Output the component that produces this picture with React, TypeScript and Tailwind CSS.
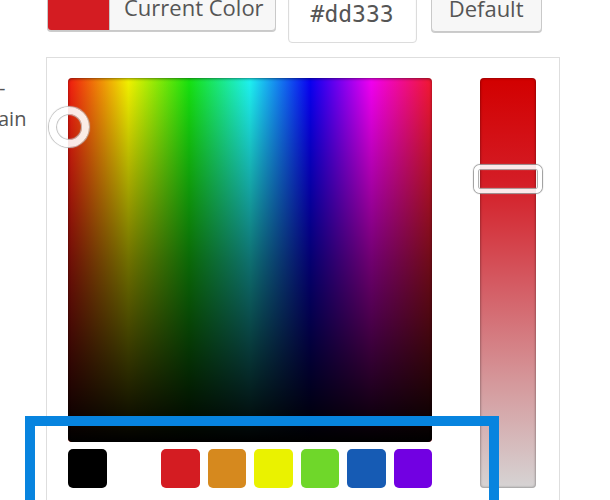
import React from 'react';

const palette = ['#000000', '#ffffff', '#d41c22', '#d6891e', '#eaf200', '#6fd72a', '#165bb4', '#7200e2'];

function CurrentColorButton() {
  return (
    <button className="flex h-[47px] items-stretch overflow-hidden rounded-[4px] border border-[#c9c9c9] bg-[#f7f7f7] shadow-[0_1px_0_#ccc]">
      <span className="w-[61px] bg-[#d41c22]" />
      <span className="flex items-center border-l border-[#c9c9c9] pl-[14px] pr-[11px] text-[22px] text-[#555]">
        Current Color
      </span>
    </button>
  );
}

function HueSquare() {
  return (
    <div className="relative h-[364px] w-[364px]">
      <div className="h-full w-full rounded-[4px] bg-[linear-gradient(to_right,#ff1a10_0%,#ffff00_16.6%,#18ee10_33.3%,#20ffff_50%,#0a00ff_66.6%,#ff00ff_83.3%,#ff1a30_100%)]">
        <div className="h-full w-full rounded-[4px] bg-[linear-gradient(to_bottom,rgba(0,0,0,0.05),rgba(0,0,0,0.56)_50%,#000_100%)] shadow-[inset_0_1px_3px_rgba(0,0,0,0.45)]" />
      </div>
      {/* picker handle */}
      <div className="absolute left-[-19px] top-[29px] h-10 w-10 rounded-full border-[7px] border-white/90 shadow-[0_0_1px_1px_#bdbdbd,inset_0_0_1px_1px_#bdbdbd]" />
    </div>
  );
}

function SaturationSlider() {
  return (
    <div className="relative w-[56px] self-stretch">
      <div className="h-full w-full rounded-[4px] bg-[linear-gradient(to_bottom,#d20000_0%,#d41c25_25%,#d45a62_50%,#d59a9d_75%,#d6d4d4_100%)] shadow-[inset_0_0_2px_1px_rgba(0,0,0,0.25)]" />
      <div className="absolute left-[-6px] top-[87px] h-[28px] w-[68px] rounded-[6px] border-[4px] border-white/90 shadow-[0_0_1px_1px_#9a9a9a,inset_0_0_1px_1px_#aaa]" />
    </div>
  );
}

export default function App() {
  return (
    <div
      className="relative h-[500px] w-[610px] overflow-hidden bg-white"
      style={{ fontFamily: '"Open Sans", "Noto Sans", sans-serif' }}
    >
      <div className="-mt-[16px]">
        <div className="flex items-start pl-[47px]">
          <CurrentColorButton />
          <div className="ml-[12px] flex h-[59px] w-[129px] items-center justify-center rounded-[4px] border border-[#dcdcdc] bg-white pt-[2px] text-[23px] text-[#555] shadow-[inset_0_1px_2px_rgba(0,0,0,0.07)]" style={{ fontFamily: '"DejaVu Sans Mono", monospace' }}>
            #dd333
          </div>
          <button className="ml-[14px] flex h-[48px] w-[111px] items-center justify-center rounded-[4px] border border-[#c9c9c9] bg-[#f7f7f7] text-[22px] text-[#555] shadow-[0_1px_0_#ccc]">
            Default
          </button>
        </div>

        <div className="mt-[14px] flex">
          <div className="flex w-[46px] flex-col pt-[15px] text-[20px] leading-[31px] text-[#555]">
            <span className="-ml-[1px]">-</span>
            <span className="-ml-[2px]">ain</span>
          </div>
          <div className="flex h-[480px] w-[514px] gap-[48px] border-[1.5px] border-[#dedede] pl-[21px] pt-[20px]">
            <div className="flex flex-col gap-[7px]">
              <HueSquare />
              <div className="grid grid-cols-8 gap-[8px]">
                {palette.map((c) => (
                  <span key={c} className="h-[39px] rounded-[5px]" style={{ backgroundColor: c }} />
                ))}
              </div>
            </div>
            <div className="flex h-[410px]">
              <SaturationSlider />
            </div>
          </div>
        </div>
      </div>

      {/* highlight frame */}
      <div className="absolute left-[25px] top-[416px] h-[140px] w-[474px] border-[10px] border-[#0784df]" />
    </div>
  );
}
